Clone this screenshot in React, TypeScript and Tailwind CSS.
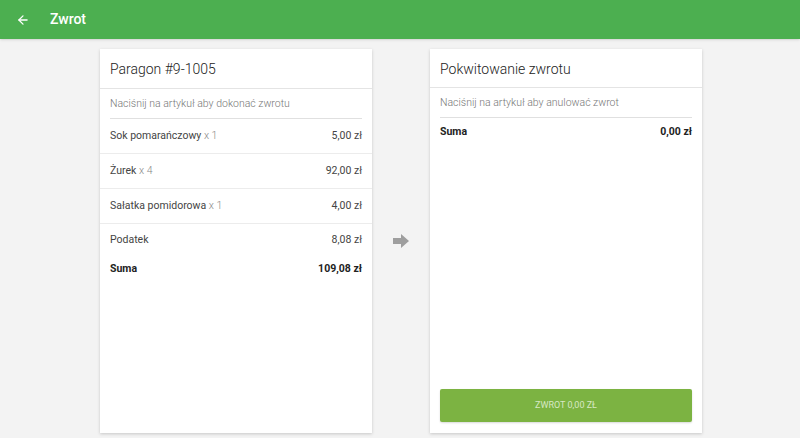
import { ArrowLeft } from "lucide-react";

const items = [
  { name: "Sok pomarańczowy", qty: 1, price: "5,00 zł" },
  { name: "Żurek", qty: 4, price: "92,00 zł" },
  { name: "Sałatka pomidorowa", qty: 1, price: "4,00 zł" },
];

function App() {
  return (
    <main className="h-[438px] w-[800px] overflow-hidden bg-[#f3f3f3] font-['Roboto',sans-serif] text-[#333]">
      <header className="flex h-[39px] items-center bg-[#4caf50] px-[16px] text-white shadow-sm">
        <ArrowLeft size={14} strokeWidth={2.2} />
        <h1 className="ml-[20px] text-[14px] font-medium">Zwrot</h1>
      </header>

      <div className="mt-[10px] flex justify-center gap-[18px] pl-[2px]">
        <section className="flex h-[384px] w-[272px] flex-col bg-white shadow-[0_1px_3px_rgba(0,0,0,0.18)]">
          <h2 className="flex h-[40px] items-center border-b border-[#e4e4e4] px-[10px] pt-[2px] text-[14px] font-light text-[#222]">
            Paragon #9-1005
          </h2>
          <div className="mx-[10px] flex h-[30px] items-center border-b border-[#e0e0e0] text-[10.5px] font-light text-[#777]">
            Naciśnij na artykuł aby dokonać zwrotu
          </div>
          {items.map((item) => (
            <div
              key={item.name}
              className="flex h-[35px] items-center justify-between border-b border-[#ececec] px-[10px] text-[10.5px] text-[#444]"
            >
              <span>
                {item.name} <span className="font-light text-[#888]">x {item.qty}</span>
              </span>
              <span>{item.price}</span>
            </div>
          ))}
          <div className="flex h-[32px] items-center justify-between px-[10px] text-[10.5px] text-[#444]">
            <span>Podatek</span>
            <span>8,08 zł</span>
          </div>
          <div className="flex h-[26px] items-center justify-between px-[10px] text-[10.5px] font-bold text-[#222]">
            <span>Suma</span>
            <span>109,08 zł</span>
          </div>
        </section>

        <div className="flex w-[22px] items-center justify-center">
          <svg width="16" height="14" viewBox="0 0 16 14">
            <path d="M0 4 H8 V0 L16 7 L8 14 V10 H0 Z" fill="#9e9e9e" />
          </svg>
        </div>

        <section className="flex h-[384px] w-[272px] flex-col bg-white shadow-[0_1px_3px_rgba(0,0,0,0.18)]">
          <h2 className="flex h-[39px] items-center border-b border-[#e4e4e4] px-[10px] pt-[2px] text-[14px] font-light text-[#222]">
            Pokwitowanie zwrotu
          </h2>
          <div className="mx-[10px] flex h-[30px] items-center border-b border-[#e0e0e0] text-[10.5px] font-light text-[#777]">
            Naciśnij na artykuł aby anulować zwrot
          </div>
          <div className="flex h-[28px] items-center justify-between px-[10px] text-[10.5px] font-bold text-[#222]">
            <span>Suma</span>
            <span>0,00 zł</span>
          </div>
          <div className="flex-1" />
          <button className="mx-[10px] mb-[11px] h-[33px] rounded-[2px] bg-[#7cb342] text-[9px] uppercase text-[#d7e8c4] shadow-[0_1px_2px_rgba(0,0,0,0.15)]">
            Zwrot 0,00 zł
          </button>
        </section>
      </div>
    </main>
  );
}

export default App;
